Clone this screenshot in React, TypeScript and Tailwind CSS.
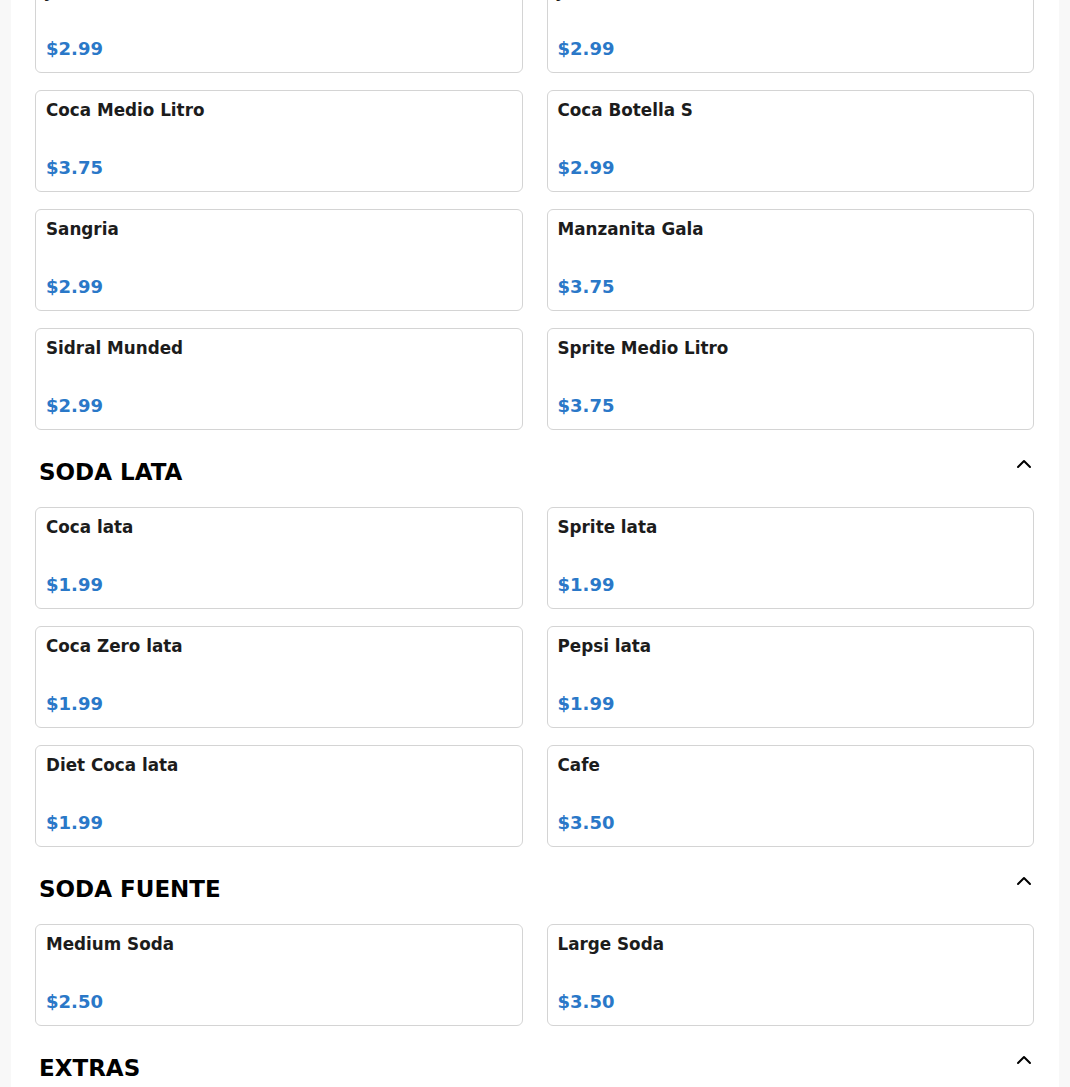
import { ChevronUp } from "lucide-react"

type Item = { name: string; price: string }

const sections: { title?: string; items: Item[] }[] = [
  {
    items: [
      { name: "Jarritos Tamarindo", price: "$2.99" },
      { name: "Jarritos Mandarina", price: "$2.99" },
      { name: "Coca Medio Litro", price: "$3.75" },
      { name: "Coca Botella S", price: "$2.99" },
      { name: "Sangria", price: "$2.99" },
      { name: "Manzanita Gala", price: "$3.75" },
      { name: "Sidral Munded", price: "$2.99" },
      { name: "Sprite Medio Litro", price: "$3.75" },
    ],
  },
  {
    title: "SODA LATA",
    items: [
      { name: "Coca lata", price: "$1.99" },
      { name: "Sprite lata", price: "$1.99" },
      { name: "Coca Zero lata", price: "$1.99" },
      { name: "Pepsi lata", price: "$1.99" },
      { name: "Diet Coca lata", price: "$1.99" },
      { name: "Cafe", price: "$3.50" },
    ],
  },
  {
    title: "SODA FUENTE",
    items: [
      { name: "Medium Soda", price: "$2.50" },
      { name: "Large Soda", price: "$3.50" },
    ],
  },
  { title: "EXTRAS", items: [] },
]

function ItemCard({ item }: { item: Item }) {
  return (
    <div className="flex h-[102px] flex-col justify-between rounded-md border border-[#d4d4d4] bg-white px-[10px] pt-[10px] pb-[13px]">
      <span className="text-[16.8px] leading-[19px] font-bold text-[#1c1c1c]">{item.name}</span>
      <span className="text-[18px] leading-[21px] font-bold text-[#2a78c8]">{item.price}</span>
    </div>
  )
}

export default function App() {
  return (
    <div className="min-h-screen overflow-hidden bg-[#f8f8f8] px-[11px]" style={{ fontFamily: '"DejaVu Sans", sans-serif' }}>
      <div className="h-[1087px] overflow-hidden bg-white pl-6 pr-[25px]">
        {sections.map((section, i) => (
          <section key={i} className={i === 0 ? "-mt-[29px]" : "mt-[25px]"}>
            {section.title && (
              <div className="mb-[22px] flex items-start justify-between pl-1">
                <h2 className="pt-[4px] text-[23px] leading-[26px] font-bold text-black">{section.title}</h2>
                <ChevronUp className="-mt-[3px] -mr-[2px] h-6 w-6 text-black" strokeWidth={2} />
              </div>
            )}
            <div className="grid grid-cols-2 gap-x-6 gap-y-[17px]">
              {section.items.map((item) => (
                <ItemCard key={item.name} item={item} />
              ))}
            </div>
          </section>
        ))}
      </div>
    </div>
  )
}
